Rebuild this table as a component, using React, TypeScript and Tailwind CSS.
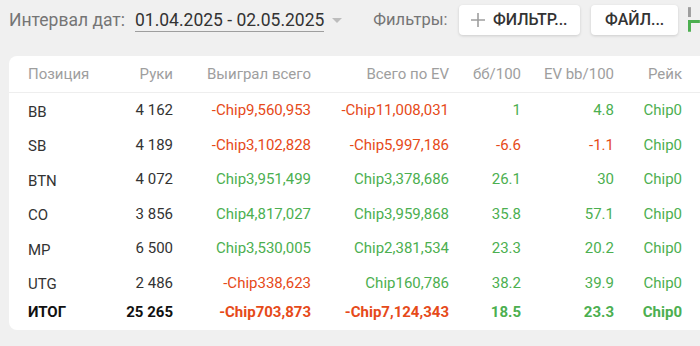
const rows = [
  { pos: 'BB', hands: '4 162', won: '-Chip9,560,953', ev: '-Chip11,008,031', bb: '1', evbb: '4.8', rake: 'Chip0' },
  { pos: 'SB', hands: '4 189', won: '-Chip3,102,828', ev: '-Chip5,997,186', bb: '-6.6', evbb: '-1.1', rake: 'Chip0' },
  { pos: 'BTN', hands: '4 072', won: 'Chip3,951,499', ev: 'Chip3,378,686', bb: '26.1', evbb: '30', rake: 'Chip0' },
  { pos: 'CO', hands: '3 856', won: 'Chip4,817,027', ev: 'Chip3,959,868', bb: '35.8', evbb: '57.1', rake: 'Chip0' },
  { pos: 'MP', hands: '6 500', won: 'Chip3,530,005', ev: 'Chip2,381,534', bb: '23.3', evbb: '20.2', rake: 'Chip0' },
  { pos: 'UTG', hands: '2 486', won: '-Chip338,623', ev: 'Chip160,786', bb: '38.2', evbb: '39.9', rake: 'Chip0' },
]

const tone = (v: string) => (v.startsWith('-') ? 'text-[#e64a19]' : 'text-[#4caf50]')

const cols = 'grid grid-cols-[91px_73px_138px_138px_72px_93px_68px]'

export default function App() {
  return (
    <div className="h-[346px] w-[700px] overflow-hidden bg-[#f0f0f0] font-['Roboto',sans-serif]">
      <div className="flex h-[40px] items-center whitespace-nowrap pl-[9px]">
        <span className="text-[17.5px] text-[#757575]">Интервал дат:</span>
        <span className="ml-[10px] border-b border-[#9e9e9e] text-[17.5px] leading-[22px] text-[#333]">
          01.04.2025 - 02.05.2025
        </span>
        <span className="ml-[8px] mt-[1px] h-0 w-0 border-x-[5px] border-t-[5px] border-x-transparent border-t-[#bdbdbd]" />
        <span className="ml-[31px] text-[16.5px] text-[#757575]">Фильтры:</span>
        <button className="ml-[11px] flex h-[30px] w-[123px] items-center justify-center gap-[8px] rounded bg-white text-[16px] font-medium text-[#333] shadow-[0_1px_3px_rgba(0,0,0,0.15)]">
          <svg width="14" height="14" viewBox="0 0 14 14">
            <path d="M7 0v14M0 7h14" stroke="#9e9e9e" strokeWidth="1.6" />
          </svg>
          ФИЛЬТР...
        </button>
        <button className="ml-[11px] flex h-[30px] w-[88px] items-center justify-center rounded bg-white text-[16px] font-medium text-[#333] shadow-[0_1px_3px_rgba(0,0,0,0.15)]">
          ФАЙЛ...
        </button>
        <svg className="ml-[10px]" width="12" height="30" viewBox="0 0 12 30">
          <rect x="0" y="2" width="3" height="10" fill="#9e9e9e" />
          <path d="M1.5 27V16.5H12" fill="none" stroke="#4caf50" strokeWidth="3" />
        </svg>
      </div>

      <div className="ml-[9px] mt-[16px] w-[720px] rounded-lg bg-white pb-[6px] text-[15px]">
        <div className={`${cols} h-[37px] items-center border-b border-[#eeeeee] text-[#9e9e9e]`}>
          <div className="pl-[19px]">Позиция</div>
          <div className="text-right">Руки</div>
          <div className="text-right">Выиграл всего</div>
          <div className="text-right">Всего по EV</div>
          <div className="text-right">бб/100</div>
          <div className="text-right">EV bb/100</div>
          <div className="text-right">Рейк</div>
        </div>
        {rows.map((r) => (
          <div key={r.pos} className={`${cols} h-[34.5px] items-center`}>
            <div className="pl-[19px] pt-[3px] text-[#333]">{r.pos}</div>
            <div className="text-right text-[#333]">{r.hands}</div>
            <div className={`text-right ${tone(r.won)}`}>{r.won}</div>
            <div className={`text-right ${tone(r.ev)}`}>{r.ev}</div>
            <div className={`text-right ${tone(r.bb)}`}>{r.bb}</div>
            <div className={`text-right ${tone(r.evbb)}`}>{r.evbb}</div>
            <div className="text-right text-[#4caf50]">{r.rake}</div>
          </div>
        ))}
        <div className={`${cols} h-[24px] items-center font-bold`}>
          <div className="pl-[19px] text-[#111]">ИТОГ</div>
          <div className="text-right text-[#111]">25 265</div>
          <div className="text-right text-[#e64a19]">-Chip703,873</div>
          <div className="text-right text-[#e64a19]">-Chip7,124,343</div>
          <div className="text-right text-[#4caf50]">18.5</div>
          <div className="text-right text-[#4caf50]">23.3</div>
          <div className="text-right text-[#4caf50]">Chip0</div>
        </div>
      </div>
    </div>
  )
}
